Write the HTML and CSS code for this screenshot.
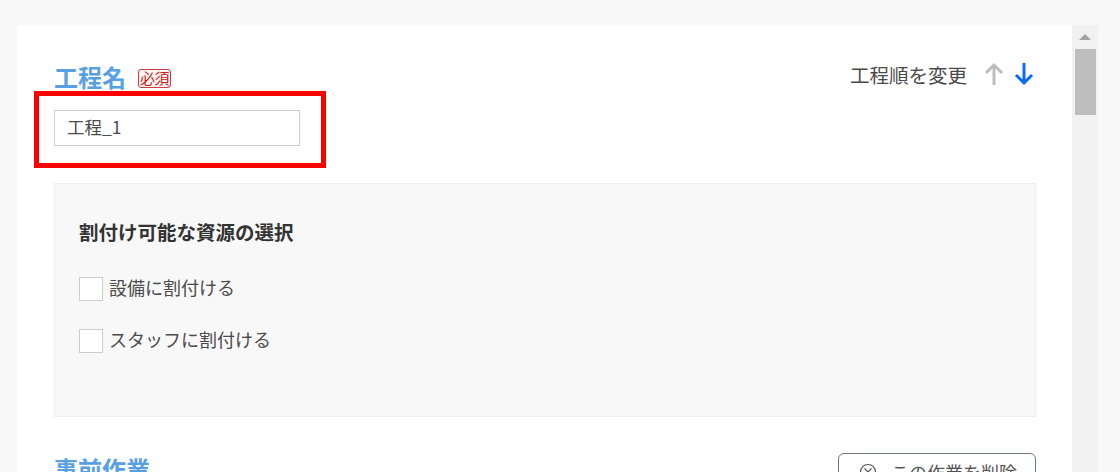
FILE: index.html
```html
<!DOCTYPE html>
<html lang="ja">
<head>
  <meta charset="UTF-8" />
  <meta name="viewport" content="width=device-width, initial-scale=1.0"/>
  <title>工程</title>
  <link rel="stylesheet" href="styles.css">
</head>
<body>
  <div class="frame">
    <main class="panel">
      <div class="section-head">
        <div class="title-wrap">
          <h2 class="section-title">工程名</h2>
          <span class="required">必須</span>
        </div>
        <div class="order">
          <span class="order-label">工程順を変更</span>
          <svg class="arrow" width="20" height="24" viewBox="0 0 20 24" fill="none" stroke="#bdbdbd" stroke-width="3">
            <path d="M10 23V3M2 11l8-8 8 8"/>
          </svg>
          <svg class="arrow" width="20" height="24" viewBox="0 0 20 24" fill="none" stroke="#0a6cf0" stroke-width="3">
            <path d="M10 1v20M2 13l8 8 8-8"/>
          </svg>
        </div>
      </div>

      <div class="name-field">
        <input class="text-input" type="text" value="工程_1">
        <div class="highlight"></div>
      </div>

      <section class="resource-box">
        <h3 class="resource-title">割付け可能な資源の選択</h3>
        <label class="check-row"><span class="check"></span>設備に割付ける</label>
        <label class="check-row"><span class="check"></span>スタッフに割付ける</label>
      </section>

      <div class="section-head work-head">
        <h2 class="section-title">事前作業</h2>
        <button class="delete-btn">
          <svg width="18" height="18" viewBox="0 0 18 18" fill="none" stroke="#555" stroke-width="1.2">
            <circle cx="9" cy="9" r="7.5"/>
            <path d="M5.5 5.5l7 7M12.5 5.5l-7 7"/>
          </svg>
          この作業を削除
        </button>
      </div>
    </main>

    <div class="scrollbar">
      <div class="scroll-up"></div>
      <div class="scroll-thumb"></div>
    </div>
  </div>
</body>
</html>
```

FILE: styles.css
```css
html, body {
  height: 100%;
}

body {
  margin: 0;
  background-color: #f8f8f8;
  color: #4a4a4a;
  font-family: "Noto Sans CJK JP", "Noto Sans", sans-serif;
  overflow: hidden;
}

.frame {
  display: flex;
  height: 447px;
  margin: 25px 22px 0 17px;
  overflow: hidden;
}

.panel {
  flex: 1;
  padding: 34px 36px 0 37px;
  background: #fff;
}

.section-head {
  display: flex;
  justify-content: space-between;
  align-items: center;
  height: 36px;
}

.title-wrap {
  display: flex;
  align-items: center;
  gap: 12px;
}

.section-title {
  margin: 0;
  color: #58a0e4;
  font-size: 24px;
  font-weight: 700;
  line-height: 36px;
}

.required {
  width: 33px;
  height: 19px;
  margin-top: 3px;
  border: 1px solid #cf3a3a;
  border-radius: 3px;
  box-sizing: border-box;
  background: #fdf6f6;
  color: #c22;
  font-size: 15px;
  line-height: 16px;
  letter-spacing: -0.5px;
  text-align: center;
}

.order {
  display: flex;
  align-items: center;
  margin-right: 2px;
  margin-bottom: 7px;
}

.order-label {
  margin-top: 2px;
  margin-right: 17px;
  font-size: 19.5px;
}

.arrow + .arrow {
  margin-left: 10px;
}

.name-field {
  position: relative;
  margin-top: 15px;
}

.text-input {
  display: block;
  width: 246px;
  height: 36px;
  box-sizing: border-box;
  padding: 0 13px 3px 12px;
  border: 1px solid #ccc;
  background: #fff;
  color: #4a4a4a;
  font-family: inherit;
  font-size: 17.5px;
}

.highlight {
  position: absolute;
  left: -20px;
  top: -19px;
  width: 292px;
  height: 77px;
  box-sizing: border-box;
  border: 5px solid #f00;
}

.resource-box {
  height: 234px;
  box-sizing: border-box;
  margin-top: 37px;
  padding: 33px 24px 0;
  border: 1px solid #f0f0f0;
  background: #f8f8f8;
}

.resource-title {
  margin: 0 0 27px;
  color: #333;
  font-size: 19.5px;
  font-weight: 700;
  line-height: 30px;
}

.check-row {
  display: flex;
  align-items: center;
  gap: 6px;
  height: 26px;
  margin-bottom: 26px;
  font-size: 18px;
}

.check {
  width: 24px;
  height: 24px;
  margin-top: 4px;
  box-sizing: border-box;
  border: 1px solid #ccc;
  background: #fff;
}

.work-head {
  margin-top: 36px;
  align-items: flex-start;
}

.work-head .section-title {
  margin-top: -2px;
}

.delete-btn {
  display: flex;
  align-items: center;
  justify-content: center;
  gap: 14px;
  width: 198px;
  height: 40px;
  padding-bottom: 3px;
  padding-left: 8px;
  border: 1px solid #6c7a7a;
  border-radius: 6px;
  background: #fff;
  color: #555;
  font-family: inherit;
  font-size: 18px;
}

.scrollbar {
  display: flex;
  flex-direction: column;
  align-items: center;
  width: 26px;
  background: #f1f1f1;
}

.scroll-up {
  width: 0;
  height: 0;
  margin-top: 9px;
  border-left: 6px solid transparent;
  border-right: 6px solid transparent;
  border-bottom: 6px solid #a3a3a3;
}

.scroll-thumb {
  width: 21px;
  height: 66px;
  margin-top: 9px;
  background: #bdbdbd;
}
```
